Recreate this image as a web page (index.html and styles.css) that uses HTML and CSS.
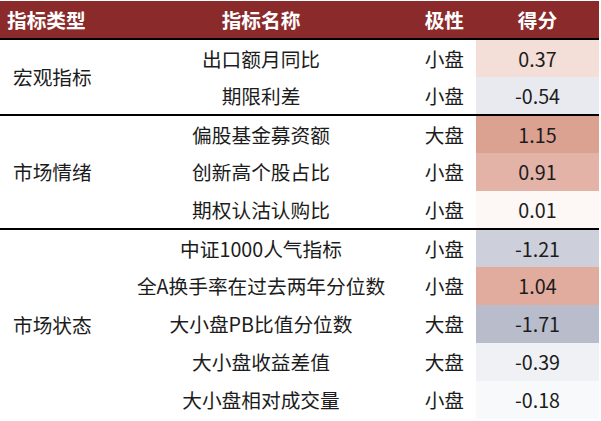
FILE: index.html
```html
<!DOCTYPE html>
<html lang="zh">
<head>
<meta charset="utf-8">
<link rel="stylesheet" href="styles.css">
</head>
<body>
<table class="tbl">
  <colgroup>
    <col class="c1"><col class="c2"><col class="c3"><col class="c4">
  </colgroup>
  <thead>
    <tr class="head">
      <th class="h1">指标类型</th>
      <th class="h2">指标名称</th>
      <th class="h3">极性</th>
      <th class="h4">得分</th>
    </tr>
  </thead>
  <tbody class="grp">
    <tr>
      <td class="type" rowspan="2">宏观指标</td>
      <td class="name">出口额月同比</td>
      <td class="pol">小盘</td>
      <td class="score s037">0.37</td>
    </tr>
    <tr>
      <td class="name">期限利差</td>
      <td class="pol">小盘</td>
      <td class="score sm054">-0.54</td>
    </tr>
  </tbody>
  <tbody class="grp">
    <tr>
      <td class="type" rowspan="3">市场情绪</td>
      <td class="name">偏股基金募资额</td>
      <td class="pol">大盘</td>
      <td class="score s115">1.15</td>
    </tr>
    <tr>
      <td class="name">创新高个股占比</td>
      <td class="pol">小盘</td>
      <td class="score s091">0.91</td>
    </tr>
    <tr>
      <td class="name">期权认沽认购比</td>
      <td class="pol">小盘</td>
      <td class="score s001">0.01</td>
    </tr>
  </tbody>
  <tbody class="grp last">
    <tr>
      <td class="type" rowspan="5">市场状态</td>
      <td class="name">中证1000人气指标</td>
      <td class="pol">小盘</td>
      <td class="score sm121">-1.21</td>
    </tr>
    <tr>
      <td class="name">全A换手率在过去两年分位数</td>
      <td class="pol">小盘</td>
      <td class="score s104">1.04</td>
    </tr>
    <tr>
      <td class="name">大小盘PB比值分位数</td>
      <td class="pol">大盘</td>
      <td class="score sm171">-1.71</td>
    </tr>
    <tr>
      <td class="name">大小盘收益差值</td>
      <td class="pol">大盘</td>
      <td class="score sm039">-0.39</td>
    </tr>
    <tr>
      <td class="name">大小盘相对成交量</td>
      <td class="pol">小盘</td>
      <td class="score sm018">-0.18</td>
    </tr>
  </tbody>
</table>
</body>
</html>
```

FILE: styles.css
```css
html, body {
  margin: 0;
  padding: 0;
  background: #ffffff;
}
body {
  padding-top: 1px;
  font-family: "Noto Sans CJK SC", "Noto Sans", sans-serif;
  color: #1c1c1c;
}
.tbl {
  width: 599px;
  border-collapse: collapse;
  table-layout: fixed;
  font-size: 19.7px;
}
.c1 { width: 122px; }
.c2 { width: 278px; }
.c3 { width: 76px; }
.c4 { width: 123px; }
.tbl th, .tbl td {
  padding: 0;
  white-space: nowrap;
  line-height: 20px;
}
.head th {
  background: #8b2a2a;
  color: #ffffff;
  font-weight: 700;
  height: 37px;
  border-bottom: 2px solid #000000;
}
.h1 { text-align: left; padding-left: 7px !important; }
.h2 { text-align: center; }
.h3 { text-align: right; padding-right: 12px !important; }
.h4 { text-align: center; }
.grp tr { height: 38px; }
.grp tr:last-child td { border-bottom: 2px solid #000000; }
.grp td.type { border-bottom: 2px solid #000000; }
.grp.last tr:last-child td, .grp.last td.type { border-bottom: none; }
.type { text-align: left; padding-left: 13px !important; vertical-align: middle; }
.name { text-align: center; }
.pol { text-align: right; padding-right: 12px !important; }
.score { text-align: center; }
.s037 { background: #f3ded8; }
.sm054 { background: #e9eaef; }
.s115 { background: #dba292; }
.s091 { background: #e3b3a8; }
.s001 { background: #fdf8f6; }
.sm121 { background: #cdd0da; }
.s104 { background: #e1ac9d; }
.sm171 { background: #b8bccb; }
.sm039 { background: #f0f1f4; }
.sm018 { background: #f8f9fa; }
```
